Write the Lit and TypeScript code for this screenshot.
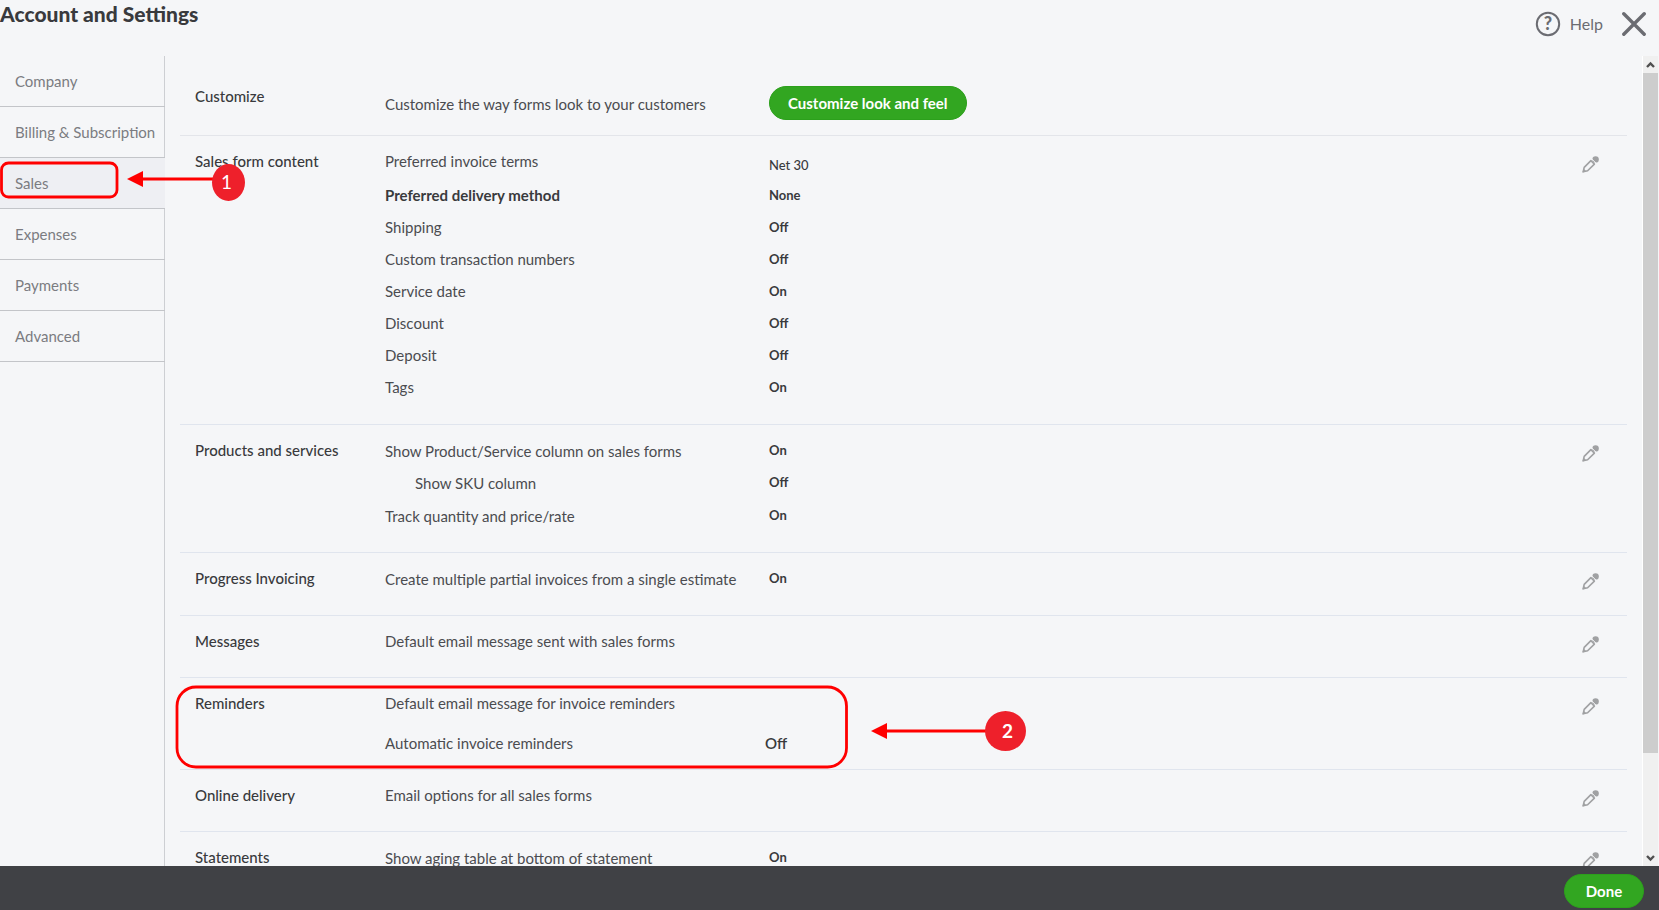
import { LitElement, html, css, svg, nothing } from "lit";
import { customElement, property } from "lit/decorators.js";
import { classMap } from "lit/directives/class-map.js";

interface Row {
  label: string;
  value?: string;
  kind?: "lead" | "strong" | "nested" | "spaced" | "large";
}

interface Section {
  title: string;
  rows: Row[];
  roomy?: boolean;
  toggles?: boolean;
  callout?: boolean;
}

const NAV = ["Company", "Billing & Subscription", "Sales", "Expenses", "Payments", "Advanced"];

const SECTIONS: Section[] = [
  {
    title: "Sales form content",
    roomy: true,
    rows: [
      { label: "Preferred invoice terms", value: "Net 30", kind: "lead" },
      { label: "Preferred delivery method", value: "None", kind: "strong" },
      { label: "Shipping", value: "Off" },
      { label: "Custom transaction numbers", value: "Off" },
      { label: "Service date", value: "On" },
      { label: "Discount", value: "Off" },
      { label: "Deposit", value: "Off" },
      { label: "Tags", value: "On" },
    ],
  },
  {
    title: "Products and services",
    roomy: true,
    toggles: true,
    rows: [
      { label: "Show Product/Service column on sales forms", value: "On" },
      { label: "Show SKU column", value: "Off", kind: "nested" },
      { label: "Track quantity and price/rate", value: "On" },
    ],
  },
  {
    title: "Progress Invoicing",
    roomy: true,
    toggles: true,
    rows: [{ label: "Create multiple partial invoices from a single estimate", value: "On" }],
  },
  { title: "Messages", rows: [{ label: "Default email message sent with sales forms" }] },
  {
    title: "Reminders",
    callout: true,
    rows: [
      { label: "Default email message for invoice reminders", kind: "spaced" },
      { label: "Automatic invoice reminders", value: "Off", kind: "large" },
    ],
  },
  { title: "Online delivery", rows: [{ label: "Email options for all sales forms" }] },
  {
    title: "Statements",
    roomy: true,
    toggles: true,
    rows: [{ label: "Show aging table at bottom of statement", value: "On" }],
  },
];

const pencil = svg`
  <path d="M1.2 15.8 L2.2 11.4 L8.9 4.6 L12.4 8.1 L5.6 14.8 Z" fill="none" stroke="#a0a1a3" stroke-width="1.6" stroke-linejoin="round"/>
  <path d="M0.4 16.6 L1.6 12.6 L4.4 15.4 Z" fill="#a0a1a3"/>
  <circle cx="13.6" cy="3.4" r="3.2" fill="#a0a1a3"/>
  <path d="M9.8 3 L14 7.2" stroke="#f5f6f8" stroke-width="1" fill="none"/>`;

@customElement("side-nav")
class SideNav extends LitElement {
  static styles = css`
    :host {
      display: block;
      width: 165px;
      flex: none;
      box-sizing: border-box;
      position: relative;
      z-index: 2;
      background: linear-gradient(to left, #cdcfd3 1px, transparent 1px);
    }
    .item {
      position: relative;
    }
    .link {
      display: block;
      box-sizing: border-box;
      height: 51px;
      line-height: 50px;
      padding-left: 15px;
      border-bottom: 1px solid #c3c5c9;
      color: #7b7c81;
      font-size: 15px;
      text-decoration: none;
      white-space: nowrap;
    }
    .active {
      background: #eeeff3;
    }
    .marker {
      position: absolute;
      left: 0;
      top: 0;
      width: 250px;
      height: 51px;
      pointer-events: none;
    }
    .digit {
      font-size: 19px;
      fill: #fff;
    }
  `;
  render() {
    return html`<nav aria-label="Settings">
      ${NAV.map((name) => {
        const active = name === "Sales";
        return html`<div class="item">
          <a href="#" class=${classMap({ link: true, active })}>${name}</a>
          ${active
            ? html`<svg class="marker" viewBox="0 0 250 51" aria-hidden="true">
                <rect x="1.5" y="5" width="115.5" height="34" rx="7" fill="none" stroke="#f00" stroke-width="2.8" />
                <path d="M140 21 H220" stroke="#f00" stroke-width="2.8" />
                <path d="M127 21 L143 13 V29 Z" fill="#f00" />
                <ellipse cx="228.5" cy="24.5" rx="16.5" ry="18.5" fill="#ee202b" />
                <text class="digit" x="221" y="31">1</text>
              </svg>`
            : nothing}
        </div>`;
      })}
    </nav>`;
  }
}

@customElement("settings-section")
class SettingsSection extends LitElement {
  @property({ attribute: false }) section!: Section;

  static styles = css`
    :host {
      display: block;
      position: relative;
      border-bottom: 1px solid #e0e5ee;
    }
    .section {
      display: grid;
      grid-template-columns: 190px 1fr auto;
      padding: 9px 28px 20px 15px;
    }
    .roomy {
      padding-bottom: 21px;
    }
    .callout {
      padding-bottom: 10px;
    }
    .title {
      margin: 0;
      font-size: 15px;
      font-weight: 500;
      line-height: 32px;
      color: #393a3d;
    }
    .row {
      display: grid;
      grid-template-columns: 384px 1fr;
      line-height: 32px;
      font-size: 15px;
      color: #4b4c50;
    }
    .value {
      font-size: 13px;
      font-weight: 700;
      color: #393a3d;
    }
    .toggles .label {
      padding-top: 1px;
      margin-bottom: -1px;
    }
    .lead {
      padding-bottom: 2px;
    }
    .lead .value {
      font-weight: 500;
      padding-top: 4px;
      margin-bottom: -4px;
    }
    .strong .label {
      font-weight: 700;
      color: #393a3d;
    }
    .nested {
      padding-bottom: 1px;
    }
    .nested .label {
      padding-left: 30px;
    }
    .spaced {
      padding-bottom: 8px;
    }
    .large {
      grid-template-columns: 380px 1fr;
    }
    .large .value {
      font-size: 15px;
      font-weight: 600;
    }
    .edit {
      align-self: start;
      margin: 11px 0 0;
      padding: 0;
      border: 0;
      background: none;
      width: 17px;
      height: 17px;
      cursor: pointer;
    }
    .icon {
      display: block;
    }
    .marker {
      position: absolute;
      left: -5px;
      top: 6px;
      width: 860px;
      height: 88px;
      pointer-events: none;
    }
    .digit {
      font-size: 19px;
      font-weight: 700;
      fill: #fff;
    }
  `;
  render() {
    const s = this.section;
    return html`<section
        class=${classMap({ section: true, roomy: !!s.roomy, toggles: !!s.toggles, callout: !!s.callout })}
      >
        <h2 class="title">${s.title}</h2>
        <div>
          ${s.rows.map(
            (r) => html`<div class="row ${r.kind ?? ""}">
              <span class="label">${r.label}</span>
              ${r.value ? html`<span class="value">${r.value}</span>` : nothing}
            </div>`
          )}
        </div>
        <button class="edit" aria-label="Edit ${s.title}">
          <svg class="icon" width="17" height="17" viewBox="0 0 17 17">${pencil}</svg>
        </button>
      </section>
      ${s.callout
        ? html`<svg class="marker" viewBox="0 0 860 88" aria-hidden="true">
            <rect x="2" y="3" width="669.5" height="80" rx="19" fill="none" stroke="#f00" stroke-width="2.8" />
            <path d="M710 47 H815" stroke="#f00" stroke-width="2.8" />
            <path d="M696 47 L712 39 V55 Z" fill="#f00" />
            <ellipse cx="830.5" cy="47" rx="20.5" ry="20" fill="#ee202b" />
            <text class="digit" x="827" y="54">2</text>
          </svg>`
        : nothing}`;
  }
}

@customElement("app-root")
class AppRoot extends LitElement {
  static styles = css`
    :host {
      display: flex;
      flex-direction: column;
      height: 100vh;
      overflow: hidden;
      background: #f5f6f8;
      font-family: Lato, "Open Sans", sans-serif;
      color: #393a3d;
    }
    .header {
      display: flex;
      justify-content: space-between;
      flex: none;
      height: 56px;
    }
    .heading {
      margin: 0;
      font-size: 21px;
      line-height: 28px;
      font-weight: 900;
    }
    .tools {
      display: flex;
      align-items: center;
      height: 48px;
      padding-right: 13px;
      gap: 19px;
    }
    .help {
      display: flex;
      align-items: center;
      gap: 9px;
      padding: 0;
      border: 0;
      background: none;
      font: inherit;
      font-size: 16px;
      line-height: 26px;
      color: #6b6c72;
    }
    .close {
      padding: 0;
      border: 0;
      background: none;
    }
    .glyph {
      display: block;
    }
    .question {
      font-size: 18px;
      font-weight: 900;
      fill: #6b6c72;
    }
    .body {
      display: flex;
      flex: 1;
      min-height: 0;
    }
    .content {
      flex: 1;
      min-width: 0;
      overflow: hidden;
      padding: 0 15px;
    }
    .intro {
      display: grid;
      grid-template-columns: 190px 384px 1fr;
      padding: 24px 28px 15px 15px;
      border-bottom: 1px solid #e3e5ea;
      font-size: 15px;
      color: #4b4c50;
    }
    .title {
      margin: 0;
      font-size: 15px;
      font-weight: 500;
      line-height: 32px;
      color: #393a3d;
    }
    .text {
      padding-top: 8px;
      line-height: 32px;
    }
    .primary {
      height: 34px;
      padding: 0 18px;
      border: 1px solid #2ca01c;
      border-radius: 17px;
      background: #32a621;
      color: #fff;
      font: inherit;
      font-size: 15px;
      font-weight: 700;
    }
    .cta {
      justify-self: start;
      margin-top: 6px;
    }
    .scrollbar {
      display: flex;
      flex-direction: column;
      flex: none;
      width: 15px;
      border-left: 1px solid #fff;
      border-right: 1px solid #f5f6f8;
      background: #f0f0f0;
    }
    .arrow {
      flex: none;
      display: block;
      width: 15px;
      height: 17px;
    }
    .track {
      display: grid;
      grid-template-rows: 680fr 96fr;
      flex: 1;
    }
    .thumb {
      background: #cdcdcd;
    }
    .footer {
      display: flex;
      justify-content: flex-end;
      align-items: flex-end;
      flex: none;
      height: 44px;
      box-sizing: border-box;
      padding: 0 15px 2px;
      background: #404145;
    }
    .done {
      width: 80px;
    }
  `;
  render() {
    return html`
      <header class="header">
        <h1 class="heading">Account and Settings</h1>
        <div class="tools">
          <button class="help">
            <svg class="glyph" width="26" height="26" viewBox="0 0 26 26" aria-hidden="true">
              <circle cx="13" cy="13" r="11.2" fill="none" stroke="#6b6c72" stroke-width="2" />
              <text class="question" x="13" y="19" text-anchor="middle">?</text>
            </svg>
            Help
          </button>
          <button class="close" aria-label="Close">
            <svg class="glyph" width="24" height="24" viewBox="0 0 24 24">
              <path d="M1.8 1.8 L22.2 22.2 M22.2 1.8 L1.8 22.2" stroke="#6b6c72" stroke-width="3.4" stroke-linecap="round" />
            </svg>
          </button>
        </div>
      </header>
      <div class="body">
        <side-nav></side-nav>
        <main class="content">
          <section class="intro">
            <h2 class="title">Customize</h2>
            <span class="text">Customize the way forms look to your customers</span>
            <button class="primary cta">Customize look and feel</button>
          </section>
          ${SECTIONS.map((s) => html`<settings-section .section=${s}></settings-section>`)}
        </main>
        <div class="scrollbar" aria-hidden="true">
          <svg class="arrow" viewBox="0 0 15 17"><path d="M4 11 L7.5 7.5 L11 11" fill="none" stroke="#505050" stroke-width="2.4" /></svg>
          <div class="track"><div class="thumb"></div></div>
          <svg class="arrow" viewBox="0 0 15 17"><path d="M4 7 L7.5 10.5 L11 7" fill="none" stroke="#505050" stroke-width="2.4" /></svg>
        </div>
      </div>
      <footer class="footer"><button class="primary done">Done</button></footer>
    `;
  }
}
